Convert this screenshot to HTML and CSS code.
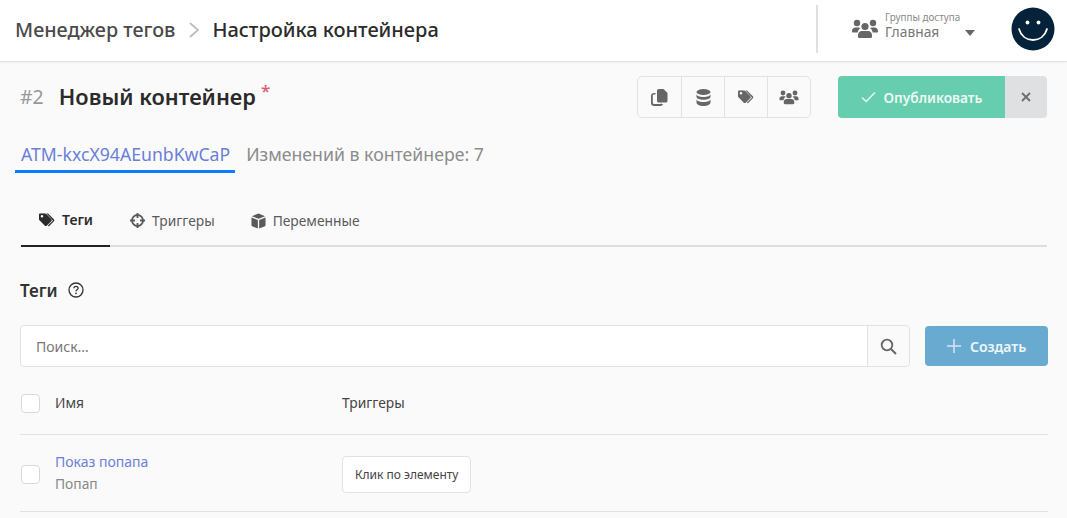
FILE: index.html
```html
<!DOCTYPE html>
<html lang="ru">
<head>
<meta charset="utf-8">
<title>Настройка контейнера</title>
<link rel="stylesheet" href="styles.css">
</head>
<body>
<svg class="sprite" width="0" height="0" aria-hidden="true">
  <defs>
    <symbol id="users" viewBox="0 0 26 20">
      <circle cx="5" cy="4" r="3.2"/><circle cx="21" cy="4" r="3.2"/><circle cx="13" cy="7.5" r="3.6"/>
      <path d="M0 12c0-2.2 1.6-3.6 3.6-3.6h3c.7 0 1.3.2 1.9.5-1.6 1-2.6 2.6-2.8 4.6H1c-.6 0-1-.4-1-1.500zM26 12.500c0 .6-.4 1-1 1h-4.300c-.2-2-1.200-3.600-2.800-4.600.6-.3 1.200-.5 1.900-.5h2.700c2 0 3.500 1.500 3.500 4.100zM10 12h6c2.400 0 4 1.700 4 4v1.400c0 .9-.7 1.600-1.600 1.600H7.600c-.9 0-1.600-.7-1.600-1.600V16c0-2.300 1.600-4 4-4z"/>
    </symbol>
    <symbol id="tags" viewBox="0 0 20 16">
      <path d="M0 1.500C0 .7.700 0 1.500 0h5.400c.5 0 1 .2 1.400.6l6.100 6.100c.8.800.8 2 0 2.800l-5 5c-.8.800-2 .8-2.800 0L.6 8.400C.2 8 0 7.500 0 7zM3.500 5a1.500 1.500 0 1 0 0-3 1.500 1.500 0 0 0 0 3z"/>
      <path d="M10.300 0l6.900 6.900c1.100 1.100 1.100 1.900 0 3l-5.700 5.700-1-1 5.400-5.400c.5-.5.500-.800 0-1.300L8.600 0z"/>
    </symbol>
  </defs>
</svg>

<header class="topbar">
  <nav class="crumbs">
    <span class="crumb-root">Менеджер тегов</span>
    <svg class="crumb-sep" viewBox="0 0 12 18" width="12" height="18"><path d="M2 2l8 7-8 7" fill="none" stroke="#bdbdbd" stroke-width="1.800"/></svg>
    <span class="crumb-current">Настройка контейнера</span>
  </nav>
  <div class="account">
    <div class="access">
      <svg class="access-icon" width="26" height="20"><use href="#users"/></svg>
      <div class="access-text">
        <span class="access-label">Группы доступа</span>
        <span class="access-value">Главная</span>
      </div>
      <span class="caret"></span>
    </div>
    <svg class="avatar" viewBox="0 0 44 44" width="44" height="44">
      <circle cx="22" cy="22" r="21.500" fill="#04233a"/>
      <circle cx="16.500" cy="15.500" r="1.900" fill="#fff"/><circle cx="27.500" cy="15.500" r="1.900" fill="#fff"/>
      <path d="M8 22c2 7 7.500 11 14 11S34 29 36 22" fill="none" stroke="#fff" stroke-width="1.800" stroke-linecap="round"/>
    </svg>
  </div>
</header>

<main class="page">
  <section class="title-row">
    <h1 class="title"><span class="title-num">#2</span><span class="title-name">Новый контейнер</span><span class="title-star">*</span></h1>
    <div class="tools">
      <button class="tool" type="button"><svg width="17" height="17" viewBox="0 0 17 17"><path d="M6 1.800C6 .8 6.800 0 7.800 0h4.700l4 4v7.700c0 1-.8 1.800-1.800 1.800H7.800c-1 0-1.800-.8-1.800-1.800z"/><path d="M4.500 4v1.500H3c-.7 0-1.200.5-1.200 1.200v7.100c0 .7.500 1.200 1.200 1.200h6.300c.7 0 1.200-.5 1.200-1.200V15H12c-.2 1.200-1.300 2-2.700 2H3c-1.700 0-3-1.300-3-3V6.700C0 5 1.300 4 3 4z"/></svg></button>
      <button class="tool" type="button"><svg width="15" height="17" viewBox="0 0 15 17"><ellipse cx="7.500" cy="3" rx="7" ry="3"/><path d="M.5 5c0 1.800 3.100 3 7 3s7-1.200 7-3v2.800c0 1.800-3.100 3-7 3s-7-1.200-7-3zM.5 10c0 1.800 3.100 3 7 3s7-1.200 7-3v3.500c0 1.900-3.100 3.500-7 3.500s-7-1.600-7-3.500z"/></svg></button>
      <button class="tool" type="button"><svg width="17" height="14" viewBox="0 0 20 16"><use href="#tags"/></svg></button>
      <button class="tool" type="button"><svg width="20" height="15" viewBox="0 0 26 20"><use href="#users"/></svg></button>
    </div>
    <div class="publish">
      <button class="publish-main" type="button"><svg width="15" height="12" viewBox="0 0 15 12"><path d="M1 6.500l4.200 4L14 1.500" fill="none" stroke="#e6f7f1" stroke-width="1.600"/></svg>Опубликовать</button>
      <button class="publish-close" type="button"><svg width="10" height="10" viewBox="0 0 10 10"><path d="M1 1l8 8M9 1l-8 8" stroke="#6b6f73" stroke-width="1.800" fill="none"/></svg></button>
    </div>
  </section>

  <section class="meta-row">
    <a class="atm">ATM-kxcX94AEunbKwCaP</a>
    <span class="changes">Изменений в контейнере: 7</span>
  </section>

  <nav class="tabs">
    <a class="tab tab-active"><svg width="17" height="14" viewBox="0 0 20 16"><use href="#tags"/></svg>Теги</a>
    <a class="tab"><svg width="15" height="15" viewBox="0 0 15 15"><circle cx="7.500" cy="7.500" r="5.500" fill="none" stroke="currentColor" stroke-width="1.800"/><path d="M7.500 0v5M7.500 10v5M0 7.500h5M10 7.500h5" stroke="currentColor" stroke-width="1.800"/></svg>Триггеры</a>
    <a class="tab"><svg width="15" height="16" viewBox="0 0 16 16"><path d="M8 0l7 2.800L8 5.600 1 2.800zM.5 4.200l6.800 2.700V16L1.200 13.500c-.4-.2-.7-.6-.7-1zM15.500 4.200v8.300c0 .4-.3.800-.7 1L8.700 16V6.900z"/></svg>Переменные</a>
  </nav>

  <h2 class="section-title">Теги<svg class="help" width="16" height="16" viewBox="0 0 16 16"><circle cx="8" cy="8" r="7" fill="none" stroke="#333" stroke-width="1.300"/><path d="M5.900 6.300c0-1.200.9-2 2.100-2s2.100.8 2.100 1.900c0 1.500-2.100 1.600-2.100 3" fill="none" stroke="#333" stroke-width="1.300"/><circle cx="8" cy="11.300" r=".9" fill="#333"/></svg></h2>

  <section class="search-row">
    <div class="search">
      <input class="search-input" type="text" placeholder="Поиск...">
      <button class="search-btn" type="button"><svg width="17" height="17" viewBox="0 0 17 17"><circle cx="7" cy="7" r="5.300" fill="none" stroke="#666" stroke-width="1.800"/><path d="M11 11l5 5" stroke="#666" stroke-width="2"/></svg></button>
    </div>
    <button class="create" type="button"><svg width="14" height="14" viewBox="0 0 14 14"><path d="M7 0v14M0 7h14" stroke="#d5e7f1" stroke-width="1.500"/></svg>Создать</button>
  </section>

  <div class="table">
    <div class="row row-head">
      <span class="check"></span>
      <span class="col-name">Имя</span>
      <span class="col-trig">Триггеры</span>
    </div>
    <div class="row row-body">
      <span class="check"></span>
      <div class="col-name">
        <a class="tag-link">Показ попапа</a>
        <span class="tag-type">Попап</span>
      </div>
      <div class="col-trig"><span class="chip">Клик по элементу</span></div>
    </div>
  </div>
</main>
</body>
</html>
```

FILE: styles.css
```css
* { box-sizing: border-box; }
html, body { margin: 0; padding: 0; }
body {
  width: 1067px;
  height: 518px;
  overflow: hidden;
  background: #fafafa;
  color: #333;
  font-family: "Noto Sans", "Open Sans", sans-serif;
}
.sprite { position: absolute; }
button { font-family: inherit; cursor: pointer; }

.topbar {
  height: 62px;
  background: #fff;
  border-bottom: 1px solid #e2e2e2;
  box-shadow: 0 1px 2px rgba(0,0,0,.04);
  display: flex;
  align-items: center;
  justify-content: space-between;
  padding: 0 12px 2px 15px;
}
.crumbs { display: flex; align-items: center; font-size: 20px; font-weight: 500; }
.crumb-root { color: #4a4a4a; font-size: 19.750px; }
.crumb-sep { margin: 0 12px 0 13px; }
.crumb-current { color: #2b2b2b; }
.account { display: flex; align-items: center; height: 48px; margin-bottom: 1px; }
.access {
  display: flex;
  align-items: center;
  height: 48px;
  width: 195px;
  padding-left: 34px;
  border-left: 2px solid #e0e0e0;
}
.access-icon { fill: #666; margin-right: 7px; }
.access-text { display: flex; flex-direction: column; width: 80px; margin-top: -6px; }
.access-label { font-size: 9.900px; line-height: 12px; color: #888; }
.access-value { font-size: 13.800px; line-height: 18px; color: #777; }
.caret {
  width: 0; height: 0;
  border-left: 5.500px solid transparent;
  border-right: 5.500px solid transparent;
  border-top: 6px solid #666;
  margin-top: 8px;
}
.avatar { display: block; }

.page { padding: 0 19px 0 20px; }

.title-row { display: flex; align-items: center; height: 42px; margin: 14px 1px 0 0; }
.title { margin: -2px 0 0; display: flex; align-items: center; flex: 1; font-size: 21.800px; font-weight: 600; }
.title-num { color: #999; font-weight: 400; font-size: 19.500px; margin: 0 15px 0 0; }
.title-name { color: #2b2b2b; }
.title-star { color: #d9596f; font-size: 17px; font-weight: 500; align-self: flex-start; margin: -3px 0 0 5px; }

.tools {
  display: flex;
  height: 42px;
  border: 1px solid #e2e2e2;
  border-radius: 5px;
  margin-right: 27px;
}
.tool {
  width: 43px;
  padding: 0;
  background: transparent;
  border: 0;
  border-left: 1px solid #e2e2e2;
  display: flex;
  align-items: center;
  justify-content: center;
}
.tool:first-child { border-left: 0; }
.tool svg { fill: #666; }

.publish { display: flex; height: 42px; }
.publish-main {
  width: 167px;
  background: #66cdae;
  border: 0;
  border-radius: 4px 0 0 4px;
  color: #eef9f5;
  font-size: 13.700px;
  font-weight: 600;
  display: flex;
  align-items: center;
  justify-content: center;
  gap: 8px;
}
.publish-close {
  width: 42px;
  background: #dfe0e2;
  border: 0;
  border-radius: 0 4px 4px 0;
  display: flex;
  align-items: center;
  justify-content: center;
}

.meta-row { display: flex; align-items: flex-start; margin: 21px 0 0 -5px; height: 34px; }
.atm {
  height: 34px;
  padding: 3px 5px 0 6px;
  color: #6b7fd7;
  font-size: 17.650px;
  line-height: 24px;
  border-bottom: 3px solid #0a7cff;
  margin-right: 11px;
  white-space: nowrap;
}
.changes { color: #8c8c8c; font-size: 17.700px; line-height: 30px; white-space: nowrap; }

.tabs {
  display: flex;
  margin: 27px 1px 0 1px;
  height: 47px;
  border-bottom: 2px solid #dedede;
}
.tab {
  display: flex;
  align-items: center;
  gap: 7px;
  height: 47px;
  padding: 0 16px 6px 20px;
  font-size: 13.800px;
  color: #5a5a5a;
}
.tab svg { fill: currentColor; }
.tab-active {
  color: #2b2b2b;
  font-size: 14px;
  font-weight: 600;
  gap: 6px;
  padding: 0 17px 6px 18px;
  border-bottom: 2px solid #222;
}

.section-title {
  display: flex;
  align-items: center;
  gap: 10px;
  margin: 30px 0 0;
  height: 26px;
  font-size: 17px;
  font-weight: 600;
  color: #333;
}

.search-row { display: flex; margin-top: 22px; }
.search {
  display: flex;
  width: 891px;
  height: 42px;
  background: #fff;
  border: 1px solid #e2e2e2;
  border-radius: 4px;
}
.search-input {
  flex: 1;
  border: 0;
  background: transparent;
  padding: 0 15px;
  font-family: inherit;
  font-size: 14px;
  outline: none;
}
.search-input::placeholder { color: #777; opacity: 1; }
.search-btn {
  width: 42px;
  border: 0;
  border-left: 1px solid #e2e2e2;
  background: #fafafa;
  border-radius: 0 4px 4px 0;
  display: flex;
  align-items: center;
  justify-content: center;
  padding: 0;
}
.create {
  width: 123px;
  height: 40px;
  margin: 1px 0 0 15px;
  background: #69abd0;
  border: 0;
  border-radius: 4px;
  color: #eef6fa;
  font-size: 14px;
  font-weight: 600;
  display: flex;
  align-items: center;
  justify-content: center;
  gap: 9px;
}

.row { display: flex; align-items: center; border-bottom: 1px solid #e2e2e2; }
.row-head { height: 68px; padding-top: 4px; }
.row-body { height: 77px; padding-top: 2px; }
.check {
  width: 19px; height: 19px;
  background: #fff;
  border: 1px solid #d8d8d8;
  border-radius: 4px;
  margin: 0 15px 0 1px;
}
.row-head .check { margin-top: 2px; }
.col-name { width: 287px; display: flex; flex-direction: column; font-size: 13.800px; color: #444; }
.col-trig { font-size: 13.800px; color: #444; }
.row-body .col-name { margin-top: -2px; }
.tag-link { color: #6b7fd7; font-size: 14px; line-height: 22px; }
.tag-type { color: #888; line-height: 22px; }
.chip {
  display: inline-block;
  height: 37px;
  line-height: 35px;
  padding: 0 12px;
  background: #fff;
  border: 1px solid #e2e2e2;
  border-radius: 4px;
  font-size: 12px;
  color: #444;
}
```
